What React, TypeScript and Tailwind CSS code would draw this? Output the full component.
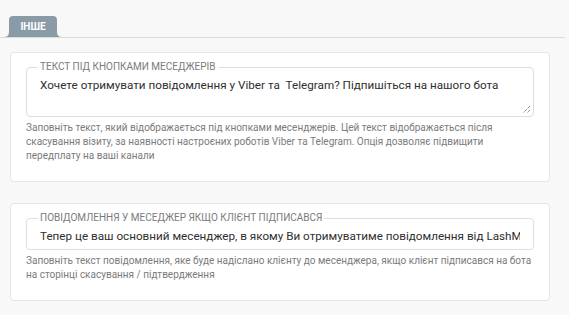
import React from "react";

function Tab({ label }: { label: string }) {
  return (
    <div className="relative ml-1 flex h-[21px] w-[58px] items-center justify-center">
      <svg className="absolute inset-0" width="58" height="21" viewBox="0 0 58 21">
        <path d="M0 21 Q5 21 5 16 L5 4 Q5 0 9 0 L49 0 Q53 0 53 4 L53 16 Q53 21 58 21 Z" fill="#8a9ba8" />
      </svg>
      <span className="relative -mt-[1px] text-[10px] font-bold text-white">{label}</span>
    </div>
  );
}

function Field({
  legend,
  value,
  multiline,
}: {
  legend: string;
  value: string;
  multiline?: boolean;
}) {
  return (
    <fieldset
      className={`relative min-w-0 rounded-[4px] border border-[#dedede] px-[13px] ${multiline ? "h-[55px]" : "h-[37px]"}`}
    >
      <legend className="ml-[-2px] px-[2px] text-[10px] leading-[10px] uppercase text-[#7b7b7b]">{legend}</legend>
      <div className="mt-[5px] overflow-hidden whitespace-pre text-[11.7px] leading-[16px] text-[#2f2f2f]">{value}</div>
      {multiline && (
        <svg className="absolute bottom-[2px] right-[2px]" width="9" height="9" viewBox="0 0 9 9">
          <path d="M8 1 L1 8 M8 5 L5 8" stroke="#555" strokeWidth="1" strokeDasharray="1 1" />
        </svg>
      )}
    </fieldset>
  );
}

function Card({
  legend,
  value,
  help,
  multiline,
}: {
  legend: string;
  value: string;
  help: string[];
  multiline?: boolean;
}) {
  return (
    <div className="mx-[10px] rounded-[4px] border border-[#e6e6e6] bg-white px-[15px] pt-[9px] pb-[18px]">
      <Field legend={legend} value={value} multiline={multiline} />
      <div className="mt-[4px] text-[10px] leading-[14px] text-[#7b7b7b]">
        {help.map((line, i) => (
          <div key={i} className="whitespace-nowrap">
            {line}
          </div>
        ))}
      </div>
    </div>
  );
}

export default function App() {
  return (
    <div className="h-[315px] w-[569px] bg-[#f8f8f8] pt-[16px] font-['Roboto',sans-serif]">
      <div className="mr-[4px] border-b border-[#dcdcdc]">
        <Tab label="ІНШЕ" />
      </div>
      <div className="mt-[14px] flex w-[560px] flex-col gap-[21px]">
        <Card
          legend="Текст під кнопками меседжерів"
          value="Хочете отримувати повідомлення у Viber та  Telegram? Підпишіться на нашого бота"
          multiline
          help={[
            "Заповніть текст, який відображається під кнопками месенджерів. Цей текст відображається після",
            "скасування візиту, за наявності настроєних роботів Viber та Telegram. Опція дозволяє підвищити",
            "передплату на ваші канали",
          ]}
        />
        <Card
          legend="Повідомлення у меседжер якщо клієнт підписався"
          value="Тепер це ваш основний месенджер, в якому Ви отримуватиме повідомлення від LashMe"
          help={[
            "Заповніть текст повідомлення, яке буде надіслано клієнту до месенджера, якщо клієнт підписався на бота",
            "на сторінці скасування / підтвердження",
          ]}
        />
      </div>
    </div>
  );
}
